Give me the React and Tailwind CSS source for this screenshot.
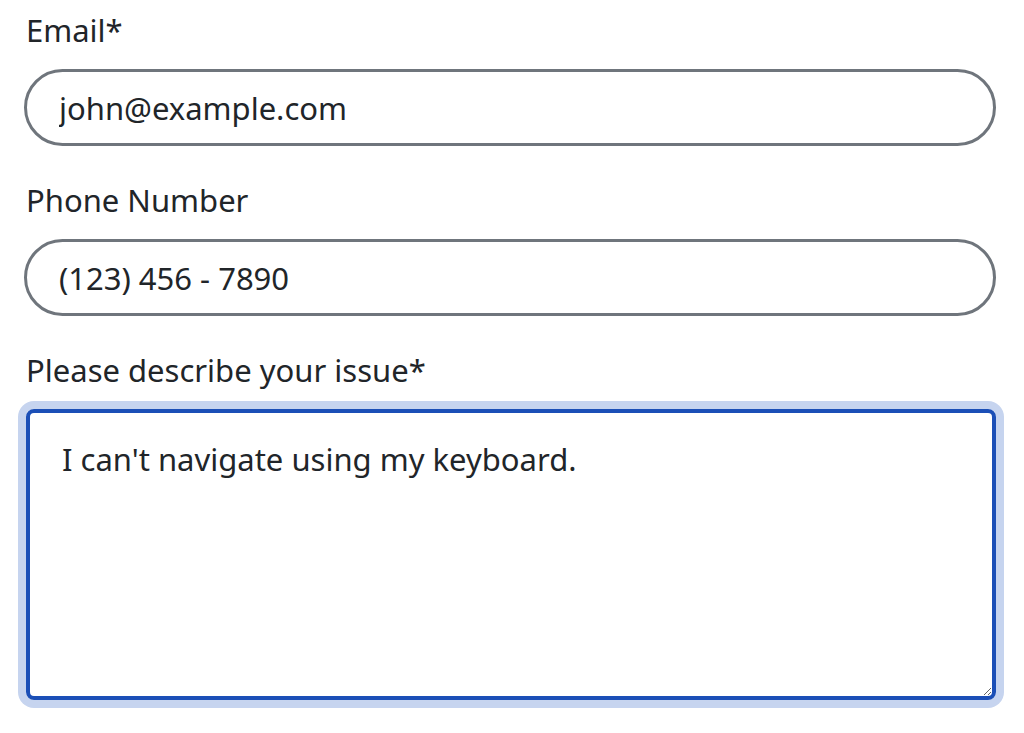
import { useEffect, useRef } from "react";

const issue = "I can't navigate using my keyboard.";

function App() {
  const areaRef = useRef(null);

  useEffect(() => {
    const el = areaRef.current;
    if (el) {
      el.focus();
      el.setSelectionRange(issue.length, issue.length);
    }
  }, []);

  return (
    <div className="min-h-screen bg-white pt-[8px] pl-[24px] pr-[28px] text-[#212529] font-['Noto_Sans',sans-serif]">
      <form className="flex flex-col">
        <label htmlFor="email" className="pl-[2px] text-[31px] leading-[44px] mb-[17px]">
          Email*
        </label>
        <input
          id="email"
          type="email"
          defaultValue="john@example.com"
          className="h-[77px] w-full rounded-full border-[3px] border-[#6f757c] px-[32px] text-[31px] outline-none"
        />

        <label htmlFor="phone" className="pl-[2px] text-[31px] leading-[44px] mt-[32px] mb-[17px]">
          Phone Number
        </label>
        <input
          id="phone"
          type="tel"
          defaultValue="(123) 456 - 7890"
          className="h-[77px] w-full rounded-full border-[3px] border-[#6f757c] px-[32px] text-[31px] outline-none"
        />

        <label htmlFor="issue" className="pl-[2px] text-[31px] leading-[44px] mt-[32px] mb-[17px]">
          Please describe your issue*
        </label>
        <textarea
          id="issue"
          ref={areaRef}
          defaultValue={issue}
          className="ml-[2px] h-[291px] rounded-[8px] border-[4px] border-[#1b4fb7] px-[32px] pt-[23px] text-[31px] outline-none shadow-[0_0_0_8px_#c6d4ef] caret-[#212529]"
        />
      </form>
    </div>
  );
}

export default App;
